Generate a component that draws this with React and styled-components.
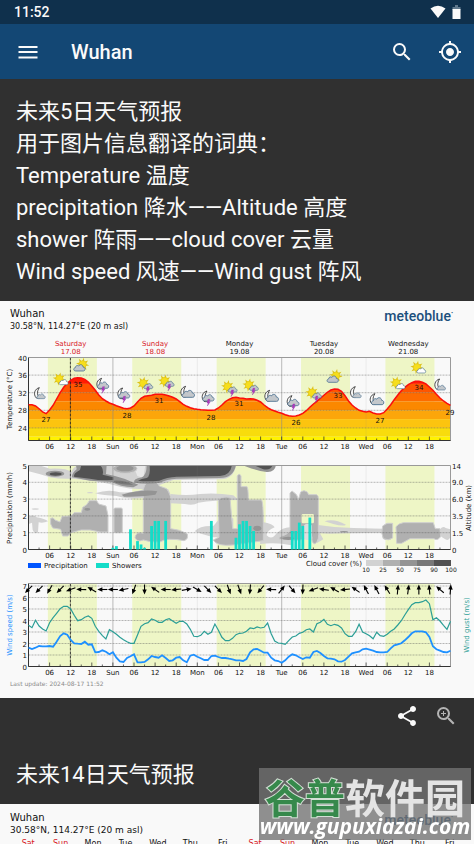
import React from 'react';
import styled, { createGlobalStyle } from 'styled-components';

const GlobalStyle = createGlobalStyle`
  * {
    box-sizing: border-box;
  }

  body {
    margin: 0;
    background-color: #303030;
  }

  button {
    padding: 0;
    border: none;
    background: none;
    color: inherit;
    cursor: pointer;
  }
`

const Screen = styled.div`
  position: relative;
  display: flex;
  flex-direction: column;
  height: 100vh;
  overflow: hidden;
  font-family: Roboto, "Noto Sans CJK SC", sans-serif;
  color: #fafafa;
`

const StatusBar = styled.div`
  display: flex;
  flex: none;
  align-items: center;
  justify-content: space-between;
  height: 24px;
  padding: 0 13px 0 14px;
  background-color: #0f304c;
  font-size: 14px;
  font-weight: 500;
`

const StatusIcons = styled.div`
  display: flex;
  align-items: center;
  gap: 6px;
`

const AppBar = styled.header`
  display: flex;
  flex: none;
  align-items: center;
  height: 55px;
  padding: 0 12px 0 16px;
  background-color: #134774;
`

const Title = styled.h1`
  flex: 1;
  margin: 0 0 0 31px;
  font-size: 20px;
  font-weight: 500;
`

const IconButton = styled.button`
  display: flex;
  align-items: center;
  justify-content: center;
  width: 24px;
  height: 24px;
  margin-left: ${(props) => props.$gap || 0}px;
  color: ${(props) => props.$color || '#fafafa'};
`

const Content = styled.main`
  flex: 1;
  min-height: 0;
  overflow-y: auto;
  scrollbar-width: none;
  background-color: #303030;
`

const Intro = styled.section`
  padding: 17px 16px 13px;
  font-size: 22px;
  line-height: 32px;

  p {
    margin: 0;
  }
`

const Actions = styled.div`
  display: flex;
  justify-content: flex-end;
  padding: 6px 16px 0 0;
`

const SectionTitle = styled.h2`
  margin: 0;
  padding: 31px 16px 13px;
  font-size: 22px;
  font-weight: 400;
  line-height: 32px;
`

const Meteogram = styled.section`
  background-color: #f9f9f9;
  color: #111;
  font-family: "DejaVu Sans", sans-serif;

  > svg {
    display: block;
    width: 100%;
    height: auto;
  }
`

const MeteogramHead = styled.div`
  display: flex;
  align-items: flex-start;
  justify-content: space-between;
  padding: ${(props) => (props.$large ? '7px 21px 1px 10px' : '6px 21px 2px 10px')};
  font-size: ${(props) => (props.$large ? 9 : 8)}px;
  line-height: 13px;
`

const City = styled.div`
  font-size: 10px;
`

const Brand = styled.div`
  color: #1c4f7c;
  font-family: Roboto, sans-serif;
  font-size: 14px;
  font-weight: 500;
  line-height: 18px;

  sup {
    font-size: 6px;
    line-height: 0;
  }
`

const DayRow = styled.div`
  display: flex;
  min-height: 240px;
  padding: 0 8px 0 12px;
  font-size: 8px;
  line-height: 12px;
`

const Day = styled.span`
  flex: 1;
  color: ${(props) => (props.$weekend ? '#d8181f' : '#111')};
  text-align: center;
`

const Watermark = styled.div`
  position: absolute;
  right: 3px;
  bottom: 4px;
  width: 212px;
  height: 72px;
  padding-top: 9px;
  background-color: rgba(114, 114, 114, 0.79);
  color: #e4e4e4;
  text-align: center;
  white-space: nowrap;
`

const WatermarkName = styled.div`
  font-family: "Noto Sans CJK SC", sans-serif;
  font-size: 40px;
  font-style: oblique 8deg;
  font-weight: 700;
  line-height: 38px;

  span {
    color: #36894b;
    -webkit-text-stroke: 2px #d4e0d6;
    paint-order: stroke fill;
  }
`

const WatermarkUrl = styled.div`
  color: #fff;
  font-family: "Open Sans", sans-serif;
  font-size: 21px;
  font-style: italic;
  font-weight: 700;
  line-height: 22px;
`

const LEFT = 28.5
const RIGHT = 450.5
const HOURS = Array.from({ length: 41 }, (_, i) => i * 3)
const xOf = (hour) => LEFT + hour * 3.5167

const DAYS = [
  { name: 'Saturday', short: 'Sat', date: '17.08', weekend: true },
  { name: 'Sunday', short: 'Sun', date: '18.08', weekend: true },
  { name: 'Monday', short: 'Mon', date: '19.08' },
  { name: 'Tuesday', short: 'Tue', date: '20.08' },
  { name: 'Wednesday', short: 'Wed', date: '21.08' },
]

const WEEK = ['Sat', 'Sun', 'Mon', 'Tue', 'Wed', 'Thu', 'Fri']

// hourly curves, three units per pixel, counted down from the top of each plot block
const TEMPERATURE = [
  314, 314, 318, 326, 336, 341, 330, 316, 297, 278, 262, 250, 241, 235, 233, 234, 238, 246, 258, 271,
  285, 296, 303, 309, 313, 317, 321, 325, 326, 324, 318, 306, 295, 289, 287, 286, 283, 283, 283, 285,
  288, 292, 297, 305, 313, 319, 323, 326, 328, 329, 330, 331, 331, 330, 324, 315, 305, 298, 293, 292,
  294, 295, 297, 296, 297, 301, 306, 315, 323, 329, 333, 337, 340, 344, 347, 349, 348, 345, 340, 332,
  322, 312, 304, 295, 286, 277, 270, 267, 268, 274, 287, 303, 315, 324, 331, 334, 336, 334, 339, 342,
  342, 338, 327, 314, 299, 285, 272, 262, 254, 248, 244, 244, 247, 252, 261, 271, 283, 294, 303, 310, 316,
]

const GUST = [
  160, 167, 145, 162, 171, 177, 152, 137, 124, 110, 103, 103, 111, 130, 146, 143, 136, 132, 139, 163,
  178, 191, 201, 173, 179, 187, 196, 203, 209, 214, 214, 189, 163, 155, 152, 141, 145, 151, 151, 143,
  140, 147, 154, 148, 148, 156, 172, 193, 194, 190, 178, 187, 181, 156, 175, 196, 206, 206, 199, 188,
  184, 183, 178, 168, 170, 165, 168, 166, 153, 185, 207, 213, 214, 217, 206, 195, 192, 184, 181, 173,
  171, 180, 155, 151, 142, 157, 161, 157, 160, 168, 185, 193, 193, 179, 157, 180, 185, 191, 200, 181,
  191, 193, 187, 178, 171, 159, 146, 129, 113, 98, 92, 92, 89, 84, 95, 143, 137, 147, 160, 172, 148,
]

const SPEED = [
  227, 231, 227, 222, 223, 223, 222, 224, 209, 192, 184, 188, 204, 214, 215, 216, 209, 218, 217, 241,
  240, 235, 239, 247, 241, 257, 268, 270, 258, 253, 247, 271, 271, 270, 262, 252, 255, 257, 250, 258,
  267, 265, 257, 255, 265, 271, 251, 248, 254, 259, 264, 264, 252, 251, 255, 258, 258, 260, 262, 265,
  265, 267, 261, 241, 232, 231, 236, 242, 242, 257, 265, 267, 272, 265, 254, 247, 250, 256, 261, 256,
  257, 240, 237, 243, 252, 259, 260, 262, 268, 269, 264, 254, 244, 241, 239, 232, 230, 233, 236, 240,
  241, 241, 240, 229, 220, 217, 214, 205, 195, 184, 178, 178, 178, 181, 195, 223, 232, 236, 240, 241, 236,
]

// direction every three hours, degrees clockwise from north
const WIND = [
  225, 225, 210, 225, 250, 272, 300, 270, 270, 258, 200, 180, 305, 270, 265, 80, 120, 135, 135, 160,
  160, 185, 220, 272, 38, 140, 182, 250, 278, 300, 265, 305, 332, 332, 328, 5, 8, 0, 355, 310, 5,
]

const SHOWERS = [
  [24, 0.1], [25, 0.2], [29, 1.2], [31, 0.5], [32, 0.3], [33, 0.1], [35, 1.4], [36, 1.7], [37, 1.7],
  [39, 1.7], [52, 1.7], [59, 0.7], [60, 1.5], [61, 1.7], [62, 1.7], [63, 1.4], [64, 1.1], [75, 1.1],
  [76, 1.1], [77, 1.6], [78, 1.4], [80, 1.9],
]

const HEAT = [
  [40, 34, '#ff1e00'],
  [34, 32, '#ff5500'],
  [32, 30, '#fd6c00'],
  [30, 28, '#fb8800'],
  [28, 26, '#fca60a'],
  [26, 24, '#fcc40f'],
  [24, 22, '#f8dc0c'],
  [22, 20, '#fff200'],
]

const ICONS = [
  ['moon', 101, 262], ['sunWhite', 178, 237], ['cloudSun', 248, 193], ['moonBolt', 288, 234],
  ['moonBolt', 351, 263], ['sunBolt', 430, 250], ['sunBolt', 494, 243], ['moonCloud', 540, 258],
  ['moonBolt', 604, 272], ['sunBolt', 683, 260], ['sunBolt', 747, 255], ['moonCloud', 792, 270],
  ['moonBolt', 859, 286], ['sunBolt', 936, 278], ['cloudSun', 1008, 227], ['moon', 1049, 259],
  ['moonCloud', 1108, 280], ['sunWhite', 1189, 249], ['sunWhite', 1251, 202], ['moon', 1302, 236],
]

const PEAKS = [
  ['27', 46, 121], ['35', 78, 86], ['28', 127, 117], ['31', 159, 102], ['28', 211, 119], ['31', 239, 105],
  ['26', 296, 124], ['33', 338, 97], ['27', 380, 122], ['34', 419, 89], ['29', 450, 114],
]

const toPoints = (data, top) => data.map((v, i) => `${xOf(i).toFixed(1)},${(top + v / 3).toFixed(1)}`).join(' ')

const Label = ({ children, ...rest }) => (
  <text fontSize="7" fill="#111" {...rest}>{children}</text>
)

const Sun = () => (
  <g>
    {[0, 45, 90, 135, 180, 225, 270, 315].map((a) => (
      <path key={a} d="M-4 -8L0 -20L4 -8Z" fill="#dcc018" transform={`rotate(${a + 10})`} />
    ))}
    <circle r="11" fill="#f6de1c" stroke="#dcc018" strokeWidth="1.5" />
  </g>
)

const Moon = () => (
  <path d="M17 1C4 4 -3 20 8 32C12 34 18 33 21 30C9 28 9 12 17 1Z" fill="#f9f9f9" stroke="#222" strokeWidth="2.4" />
)

const Cloud = ({ x, y, size = 1, fill = '#c3c7cb' }) => (
  <path
    d="M6 20C-1 20 -2 11 5 10C5 4 12 2 15 5C19 -2 28 1 28 8C36 8 36 20 29 20Z"
    transform={`translate(${x} ${y}) scale(${size})`}
    fill={fill}
    stroke="#4a7090"
    strokeWidth="2.4"
  />
)

const Bolt = ({ x, y }) => (
  <path d="M3 0L9 0L6 7L10 7L1 20L4 11L0 11Z" fill="#b23ac2" stroke="#8d2fa0" strokeWidth="1" transform={`translate(${x} ${y})`} />
)

const WEATHER = {
  moon: <><Moon /><Cloud x={9} y={19} size={0.75} /></>,
  moonCloud: <><Moon /><Cloud x={6} y={12} size={1.1} /></>,
  moonBolt: <><Moon /><Cloud x={4} y={11} size={1} /><Bolt x={17} y={26} /></>,
  sunWhite: <><Sun /><Cloud x={-1} y={1} size={0.8} fill="#fff" /></>,
  sunBolt: <><Sun /><Cloud x={1} y={0} size={0.8} /><Bolt x={9} y={10} /></>,
  cloudSun: <><Sun /><Cloud x={-27} y={0} size={1} /></>,
}

function Axes({ top, bottom, lines }) {
  return <>
    {lines.map((y) => (
      <line key={y} x1={LEFT} x2={RIGHT} y1={y} y2={y} stroke="#555" strokeOpacity="0.6" strokeWidth="0.7" strokeDasharray="2 1" />
    ))}
    {[24, 48, 72, 96].map((h) => (
      <line key={h} x1={xOf(h)} x2={xOf(h)} y1={top} y2={bottom} stroke="#888" strokeOpacity={h === 48 || h === 96 ? 0.15 : 0.7} strokeWidth="0.8" />
    ))}
    <line x1={70.4} x2={70.4} y1={top} y2={bottom} stroke="#222" strokeDasharray="3 1" strokeWidth="0.9" />
    {HOURS.map((h) => (
      <line key={h} x1={xOf(h)} x2={xOf(h)} y1={bottom} y2={bottom - (h % 6 ? 2 : 4)} stroke="#222" strokeWidth="0.7" />
    ))}
    <path d={`M${LEFT} ${top}H${RIGHT}V${bottom}`} fill="none" stroke="#999" />
    <path d={`M${LEFT} ${top}V${bottom}H${RIGHT}`} fill="none" stroke="#333" />
    {HOURS.filter((h) => h && h < 120 && h % 6 === 0).map((h) => (
      <Label key={h} x={xOf(h)} y={bottom + 8} textAnchor="middle">
        {h % 24 ? String(h % 24).padStart(2, '0') : DAYS[h / 24].short}
      </Label>
    ))}
  </>
}

function Daylight({ top, bottom }) {
  return DAYS.map((day, i) => (
    <rect key={day.name} x={xOf(i * 24 + 5.5)} y={top} width="49" height={bottom - top} fill="#eef6c6" />
  ))
}

function TemperaturePlot() {
  const top = 56.5
  const bottom = 139.5
  const yOf = (t) => top + (40 - t) * 4.4
  const curve = toPoints(TEMPERATURE, -1)

  return <g>
    {DAYS.map((day, i) => (
      <g key={day.name} textAnchor="middle">
        <Label x={xOf(i * 24 + 12)} y="45" fill={day.weekend ? '#d8181f' : '#111'}>{day.name}</Label>
        <Label x={xOf(i * 24 + 12)} y="53" fill={day.weekend ? '#d8181f' : '#111'}>{day.date}</Label>
      </g>
    ))}
    <Daylight top={top} bottom={bottom} />
    <clipPath id="heat">
      <polygon points={`${LEFT},${bottom} ${curve} ${RIGHT},${bottom}`} />
    </clipPath>
    <g clipPath="url(#heat)">
      {HEAT.map(([hi, lo, color]) => (
        <rect key={hi} x={LEFT} y={yOf(hi)} width={RIGHT - LEFT} height={yOf(lo) - yOf(hi)} fill={color} />
      ))}
    </g>
    <Axes top={top} bottom={bottom} lines={[36, 32, 28, 24].map(yOf)} />
    <polyline points={curve} fill="none" stroke="#fb0d0d" strokeWidth="1.5" />
    {[40, 36, 32, 28, 24].map((t) => (
      <Label key={t} x="27" y={yOf(t) + 3} textAnchor="end">{t}</Label>
    ))}
    {PEAKS.map(([t, x, y], i) => (
      <Label key={i} x={x} y={y} textAnchor="middle">{t}</Label>
    ))}
    <Label textAnchor="middle" transform="translate(12 98) rotate(-90)">Temperature (°C)</Label>
    <g transform="translate(0 -1) scale(0.3333)">
      {ICONS.map(([kind, x, y]) => (
        <g key={x} transform={`translate(${x} ${y})`}>{WEATHER[kind]}</g>
      ))}
    </g>
  </g>
}

function Clouds() {
  return <g transform="translate(0 149) scale(0.3333)">
    <g fill="#d2d2d2">
      <path d="M86 46H118L150 56Q200 54 214 66Q222 46 240 46H708Q702 88 660 88L520 90Q480 106 440 116Q400 120 360 110Q310 94 220 86Q180 88 150 82Q120 72 86 64Z" />
      <path d="M285 130Q320 118 345 124Q380 134 430 118Q470 108 505 118L512 134Q480 144 430 144Q380 148 350 138Q310 136 285 130Z" />
      <ellipse cx="270" cy="128" rx="9" ry="2" />
      <ellipse cx="106" cy="177" rx="11" ry="2" />
      <path d="M512 132Q560 138 600 132Q650 128 700 136L716 150Q640 150 595 158Q580 168 555 162L512 160Z" />
      <path d="M86 200Q100 192 110 202Q135 206 144 214Q130 220 116 217L114 246Q104 254 98 240L96 218L86 222Z" />
      <path d="M584 244Q600 226 640 228L660 205L700 205V262H640Q600 252 584 244Z" />
      <path d="M788 216Q820 222 824 232Q800 242 800 256Q815 272 830 250Q850 230 874 232V286Q830 276 780 282Z" />
      <path d="M955 225Q1000 232 1060 234L1150 236V248L1040 250Q980 252 960 250L970 268L950 280Z" />
      <path d="M974 214Q1000 204 1038 224Q1030 230 1000 222Z" />
      <path d="M1320 238Q1330 226 1337 234L1351 238V262Q1346 274 1336 268L1324 260Z" />
    </g>
    <path d="M372 46H436L430 84L412 78Q408 54 372 46Z" fill="#e8e8e8" />
    <g fill="#b0b0b0" stroke="#cfcfcf" strokeWidth="3">
      <path d="M152 205Q160 200 165 210L180 216L186 200L214 198L222 188L244 188L248 172Q262 166 268 152L290 152L296 162L318 168L324 196V246H300L270 240L244 240L212 248L204 258H188L182 238L158 234L152 222Z" />
      <rect x="342" y="174" width="25" height="74" rx="4" />
      <path d="M430 118Q436 92 455 94Q470 92 478 108L500 116Q506 124 512 140V236Q540 238 562 252Q566 268 552 272Q500 262 480 276Q450 278 430 270Q410 278 405 262Q408 244 430 250Z" />
      <path d="M655 150Q665 138 690 142L694 190L698 236H712V78Q718 68 723 78V110H741Q745 115 745 150H785Q790 160 790 220V272Q740 280 700 285Q650 290 640 270L657 262Z" />
      <path d="M870 130Q876 118 882 128Q892 132 895 150L902 126Q912 118 922 126L926 134H950Q956 136 955 150V240Q960 270 945 282Q934 280 936 260L900 270L850 270Q830 268 840 260Q868 252 870 240Z" />
      <path d="M1148 228Q1160 216 1178 220V264Q1166 274 1150 266Q1142 250 1148 228Z" />
      <path d="M1188 230Q1196 220 1210 218H1300L1306 236H1320L1322 260Q1312 274 1302 266H1230L1205 280H1190Z" />
      <ellipse cx="375" cy="56" rx="36" ry="14" />
    </g>
    <rect x="905" y="192" width="37" height="28" rx="4" fill="#eef6c6" />
    <rect x="912" y="222" width="24" height="48" rx="8" fill="#dedede" />
    <g fill="#949494">
      <path d="M365 134Q430 116 472 124L466 134Q420 142 372 140Z" />
      <path d="M228 46H320L318 72L345 78Q380 86 415 104L400 112Q360 110 336 96L270 92L216 82Q214 70 230 58Z" />
      <path d="M440 46H708Q700 84 660 84L530 86Q500 88 480 98Q440 104 404 98Q396 88 426 82Q440 74 440 46Z" />
      <path d="M728 46H828Q824 68 800 66Q770 62 740 50Z" />
      <ellipse cx="165" cy="71" rx="28" ry="9" />
      <ellipse cx="375" cy="55" rx="26" ry="9" />
      <ellipse cx="772" cy="235" rx="12" ry="8" />
      <ellipse cx="865" cy="265" rx="18" ry="5" />
      <ellipse cx="262" cy="178" rx="9" ry="4" />
      <ellipse cx="1032" cy="245" rx="12" ry="2" />
    </g>
    <g fill="#525252">
      <path d="M244 46H300Q312 56 308 74L340 82V90Q300 92 270 86L222 80Q220 70 240 60Z" />
      <path d="M449 46H696Q690 78 660 78L530 80Q500 82 478 92Q440 96 414 92Q424 86 440 84Q452 80 449 46Z" />
      <path d="M342 92Q370 90 400 104Q366 106 342 96Z" fill="#787878" />
      <path d="M762 46H818Q812 62 790 58Z" />
      <ellipse cx="167" cy="72" rx="18" ry="5" />
    </g>
  </g>
}

function PrecipitationPlot() {
  const top = 164.5
  const bottom = 248.5
  const yOf = (mm) => bottom - mm * 16.8

  return <g>
    <Daylight top={top} bottom={bottom} />
    <clipPath id="rain">
      <rect x={LEFT} y={top} width={RIGHT - LEFT} height={bottom - top} />
    </clipPath>
    <g clipPath="url(#rain)"><Clouds /></g>
    <Axes top={top} bottom={bottom} lines={[1, 2, 3, 4].map(yOf)} />
    {SHOWERS.map(([h, mm]) => (
      <rect key={h} x={xOf(h) - 1.4} y={yOf(mm)} width="2.8" height={mm * 16.8} fill="#14dcc8" />
    ))}
    {[0, 1, 2, 3, 4, 5].map((mm) => (
      <Label key={mm} x="27" y={yOf(mm) + 3} textAnchor="end">{mm}</Label>
    ))}
    {['0', '1.5', '3.5', '6.0', '9.0', '14'].map((km, i) => (
      <Label key={km} x="452" y={yOf(i) + 3}>{km}</Label>
    ))}
    <Label textAnchor="middle" transform="translate(12 207) rotate(-90)">Precipitation (mm/h)</Label>
    <Label textAnchor="middle" transform="translate(471 207) rotate(-90)">Altitude (km)</Label>
    <rect x="28" y="262" width="13" height="5" fill="#0055ff" />
    <Label x="44" y="267">Precipitation</Label>
    <rect x="96" y="262" width="13" height="5" fill="#14dcc8" />
    <Label x="112" y="267">Showers</Label>
    <Label x="362" y="265" textAnchor="end">Cloud cover (%)</Label>
    {['#d2d2d2', '#b0b0b0', '#949494', '#787878', '#525252'].map((color, i) => (
      <rect key={color} x={366 + i * 17} y="259" width="17" height="6" fill={color} />
    ))}
    {[10, 25, 50, 75, 90, 100].map((pct, i) => (
      <Label key={pct} x={366 + i * 17} y="271" fontSize="6" textAnchor="middle">{pct}</Label>
    ))}
  </g>
}

function WindPlot() {
  const top = 282.5
  const bottom = 365.5
  const yOf = (v) => bottom - v * 11.5

  return <g>
    <Daylight top={top} bottom={bottom} />
    <Axes top={top} bottom={bottom} lines={[1, 2, 3, 4, 5, 6, 7].map(yOf)} />
    <polyline points={toPoints(GUST, 271)} fill="none" stroke="#2b9e96" strokeWidth="1.2" />
    <polyline points={toPoints(SPEED, 271)} fill="none" stroke="#1e90ff" strokeWidth="1.8" />
    {WIND.map((deg, i) => (
      <g key={i} transform={`translate(${xOf(i * 3)} 288.5) rotate(${deg})`}>
        <path d="M0 5V-1" stroke="#000" strokeWidth="1.1" />
        <path d="M0 -5L2.2 0H-2.2Z" />
      </g>
    ))}
    {[0, 1, 2, 3, 4, 5, 6, 7].map((v) => (
      <Label key={v} x="27" y={yOf(v) + 3} textAnchor="end">{v}</Label>
    ))}
    <Label fill="#1e90ff" textAnchor="middle" transform="translate(12 324) rotate(-90)">Wind speed (m/s)</Label>
    <Label fill="#2b9e96" textAnchor="middle" transform="translate(469 324) rotate(-90)">Wind gust (m/s)</Label>
    <text x="10" y="385" fontSize="6" fill="#8a8a8a">Last update: 2024-08-17 11:52</text>
  </g>
}

function Head({ large }) {
  return <MeteogramHead $large={large}>
    <div>
      <City>Wuhan</City>
      <div>30.58°N, 114.27°E (20 m asl)</div>
    </div>
    <Brand>meteoblue<sup>•</sup></Brand>
  </MeteogramHead>
}

export default function App() {

  return <>
    <GlobalStyle />
    <Screen>
      <StatusBar>
        <span>11:52</span>
        <StatusIcons>
          <svg width="16" height="14" viewBox="0 0 16 14" fill="#fafafa"><path d="M0.500 3.500Q8 -2 15.500 3.500L8 13Z" /></svg>
          <svg width="9" height="14" viewBox="0 0 9 14">
            <path d="M3 0H6V2H8.500V5H0.500V2H3Z" fill="#60788c" />
            <path d="M0.500 4H8.500V14H0.500Z" fill="#fafafa" />
          </svg>
        </StatusIcons>
      </StatusBar>
      <AppBar>
        <IconButton aria-label="Menu">
          <svg width="20" height="14" viewBox="0 0 20 14" fill="currentColor"><path d="M0.500 1H19.500V3H0.500ZM0.500 6H19.500V8H0.500ZM0.500 11.500H19.500V13.500H0.500Z" /></svg>
        </IconButton>
        <Title>Wuhan</Title>
        <IconButton aria-label="Search">
          <svg width="24" height="24" viewBox="0 0 24 24" fill="currentColor"><path d="M15.500 14h-.79l-.28-.27A6.471 6.471 0 0 0 16 9.500 6.500 6.500 0 1 0 9.500 16c1.610 0 3.090-.59 4.230-1.570l.27.28v.79l5 4.990L20.490 19l-4.990-5zm-6 0C7.010 14 5 11.990 5 9.500S7.010 5 9.500 5 14 7.010 14 9.500 11.990 14 9.500 14z" /></svg>
        </IconButton>
        <IconButton aria-label="Locate" $gap={24}>
          <svg width="24" height="24" viewBox="0 0 24 24" fill="currentColor"><path d="M12 8c-2.210 0-4 1.790-4 4s1.790 4 4 4 4-1.790 4-4-1.790-4-4-4zm8.940 3A8.994 8.994 0 0 0 13 3.060V1h-2v2.060A8.994 8.994 0 0 0 3.060 11H1v2h2.060A8.994 8.994 0 0 0 11 20.940V23h2v-2.060A8.994 8.994 0 0 0 20.940 13H23v-2h-2.060zM12 19c-3.870 0-7-3.130-7-7s3.130-7 7-7 7 3.130 7 7-3.130 7-7 7z" /></svg>
        </IconButton>
      </AppBar>
      <Content>
        <Intro>
          <p>未来5日天气预报</p>
          <p>用于图片信息翻译的词典：</p>
          <p>Temperature 温度</p>
          <p>precipitation 降水——Altitude 高度</p>
          <p>shower 阵雨——cloud cover 云量</p>
          <p>Wind speed 风速——Wind gust 阵风</p>
        </Intro>
        <Meteogram>
          <Head />
          <svg viewBox="0 34 474 363" role="img" aria-label="Wuhan 5 day meteogram">
            <TemperaturePlot />
            <PrecipitationPlot />
            <WindPlot />
          </svg>
        </Meteogram>
        <Actions>
          <IconButton aria-label="Share">
            <svg width="24" height="24" viewBox="0 0 24 24" fill="currentColor"><path d="M18 16.080c-.76 0-1.440.3-1.960.77L8.910 12.700c.05-.23.09-.46.09-.7s-.04-.47-.09-.7l7.050-4.110c.54.5 1.250.81 2.040.81 1.660 0 3-1.340 3-3s-1.340-3-3-3-3 1.340-3 3c0 .24.04.47.09.7L8.040 9.810C7.500 9.310 6.790 9 6 9c-1.660 0-3 1.340-3 3s1.340 3 3 3c.79 0 1.500-.31 2.040-.81l7.120 4.160c-.05.21-.08.43-.08.65 0 1.610 1.310 2.920 2.920 2.920s2.920-1.310 2.920-2.920-1.310-2.920-2.920-2.920z" /></svg>
          </IconButton>
          <IconButton aria-label="Zoom in" $gap={15} $color="#b4b4b4">
            <svg width="24" height="24" viewBox="0 0 24 24" fill="currentColor"><path d="M15.500 14h-.79l-.28-.27A6.471 6.471 0 0 0 16 9.500 6.500 6.500 0 1 0 9.500 16c1.610 0 3.090-.59 4.230-1.570l.27.28v.79l5 4.990L20.490 19l-4.990-5zm-6 0C7.010 14 5 11.990 5 9.500S7.010 5 9.500 5 14 7.010 14 9.500 11.990 14 9.500 14zM12 10h-2v2H9v-2H7V9h2V7h1v2h2v1z" /></svg>
          </IconButton>
        </Actions>
        <SectionTitle>未来14日天气预报</SectionTitle>
        <Meteogram>
          <Head large />
          <DayRow>
            {[...WEEK, ...WEEK].map((day, i) => (
              <Day key={i} $weekend={day[0] === 'S'}>{day}</Day>
            ))}
          </DayRow>
        </Meteogram>
      </Content>
      <Watermark>
        <WatermarkName><span>谷普</span>软件园</WatermarkName>
        <WatermarkUrl>www.gupuxiazai.com</WatermarkUrl>
      </Watermark>
    </Screen>
  </>;

}
